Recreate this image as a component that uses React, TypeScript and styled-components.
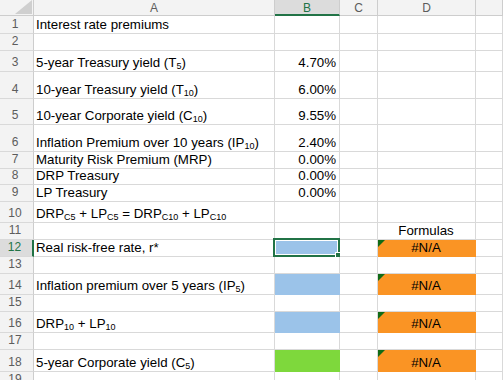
import React from "react";
import styled, { createGlobalStyle, css } from "styled-components";

const GRID = "#d9d9d9";
const HEAD_LINE = "#cdcdcd";
const EXCEL_GREEN = "#217346";

const fills = {
  blue: "#9bc3e9",
  green: "#7ed83c",
  orange: "#fa9424",
};
type Fill = keyof typeof fills;

const GlobalStyle = createGlobalStyle`
  html, body {
    margin: 0;
    padding: 0;
    background: #fff;
    overflow: hidden;
  }
  body {
    font-family: "Liberation Sans", Arial, sans-serif;
  }
`;

const Sheet = styled.div<{ $rows: string }>`
  display: grid;
  grid-template-columns: 34px 241px 65px 38px 98px 1fr;
  grid-template-rows: ${(p) => p.$rows};
  width: 503px;
  height: 380px;
  overflow: hidden;
`;

const Corner = styled.div`
  position: relative;
  background: #f3f3f3;
  border-right: 1px solid ${HEAD_LINE};
  border-bottom: 1px solid ${HEAD_LINE};

  svg {
    position: absolute;
    right: 1px;
    bottom: 1px;
  }
`;

const ColHead = styled.div<{ $active?: boolean }>`
  display: flex;
  align-items: center;
  justify-content: center;
  font-size: 12px;
  color: ${(p) => (p.$active ? EXCEL_GREEN : "#5c5c5c")};
  background: ${(p) => (p.$active ? "#dcdcdc" : "#f3f3f3")};
  border-right: 1px solid ${HEAD_LINE};
  ${(p) =>
    p.$active
      ? css`
          border-bottom: 2px solid ${EXCEL_GREEN};
          padding-top: 1px;
        `
      : css`
          border-bottom: 1px solid ${HEAD_LINE};
        `}
`;

const RowHead = styled.div<{ $active?: boolean }>`
  display: flex;
  align-items: flex-end;
  justify-content: center;
  padding: 0 3px 2px 0;
  font-size: 12px;
  line-height: 14px;
  color: ${(p) => (p.$active ? EXCEL_GREEN : "#5c5c5c")};
  background: ${(p) => (p.$active ? "#dcdcdc" : "#f3f3f3")};
  border-bottom: 1px solid ${GRID};
  border-right: ${(p) => (p.$active ? `2px solid ${EXCEL_GREEN}` : `1px solid ${HEAD_LINE}`)};
`;

const Cell = styled.div<{ $align?: "left" | "right" | "center"; $fill?: Fill }>`
  position: relative;
  display: flex;
  align-items: flex-end;
  justify-content: ${(p) =>
    p.$align === "right" ? "flex-end" : p.$align === "center" ? "center" : "flex-start"};
  min-width: 0;
  padding: 0 3px 1px 2px;
  font-size: 13.3px;
  line-height: 15px;
  color: #000;
  white-space: nowrap;
  background: ${(p) => (p.$fill ? fills[p.$fill] : "#fff")};
  border-right: 1px solid ${(p) => (p.$fill ? fills[p.$fill] : GRID)};
  border-bottom: 1px solid ${(p) => (p.$fill ? fills[p.$fill] : GRID)};
`;

// keeps text and subscripts in one inline run inside the flex cell
const Value = styled.span`
  display: block;
`;

const Sub = styled.sub`
  font-size: 9px;
  line-height: 0;
  vertical-align: -2px;
`;

// green error marker in the top-left corner
const ErrorFlag = styled.span`
  position: absolute;
  top: 0;
  left: 0;
  width: 0;
  height: 0;
  border-top: 7px solid #116b16;
  border-right: 7px solid transparent;
`;

const Selection = styled.span`
  position: absolute;
  inset: -2px -1px -1px -2px;
  border: 2px solid ${EXCEL_GREEN};
  box-shadow: inset 0 0 0 1px #fff;
  pointer-events: none;
`;

const FillHandle = styled.span`
  position: absolute;
  right: -4px;
  bottom: -4px;
  width: 5px;
  height: 5px;
  background: ${EXCEL_GREEN};
  border: 1px solid #fff;
`;

interface RowData {
  n: number;
  h: number;
  a?: React.ReactNode;
  b?: string;
  bFill?: Fill;
  d?: string;
  dFill?: Fill;
  selected?: boolean;
}

const rows: RowData[] = [
  { n: 1, h: 18, a: "Interest rate premiums" },
  { n: 2, h: 17 },
  { n: 3, h: 21, a: <>5-year Treasury yield (T<Sub>5</Sub>)</>, b: "4.70%" },
  { n: 4, h: 27, a: <>10-year Treasury yield (T<Sub>10</Sub>)</>, b: "6.00%" },
  { n: 5, h: 26, a: <>10-year Corporate yield (C<Sub>10</Sub>)</>, b: "9.55%" },
  { n: 6, h: 27, a: <>Inflation Premium over 10 years (IP<Sub>10</Sub>)</>, b: "2.40%" },
  { n: 7, h: 17, a: "Maturity Risk Premium (MRP)", b: "0.00%" },
  { n: 8, h: 16, a: "DRP Treasury", b: "0.00%" },
  { n: 9, h: 17, a: "LP Treasury", b: "0.00%" },
  {
    n: 10,
    h: 21,
    a: (
      <>
        DRP<Sub>C5</Sub> + LP<Sub>C5</Sub> = DRP<Sub>C10</Sub> + LP<Sub>C10</Sub>
      </>
    ),
  },
  { n: 11, h: 17, d: "Formulas" },
  { n: 12, h: 17, a: "Real risk-free rate, r*", bFill: "blue", d: "#N/A", dFill: "orange", selected: true },
  { n: 13, h: 17 },
  { n: 14, h: 21, a: <>Inflation premium over 5 years (IP<Sub>5</Sub>)</>, bFill: "blue", d: "#N/A", dFill: "orange" },
  { n: 15, h: 17 },
  { n: 16, h: 21, a: <>DRP<Sub>10</Sub> + LP<Sub>10</Sub></>, bFill: "blue", d: "#N/A", dFill: "orange" },
  { n: 17, h: 17 },
  { n: 18, h: 22, a: <>5-year Corporate yield (C<Sub>5</Sub>)</>, bFill: "green", d: "#N/A", dFill: "orange" },
  { n: 19, h: 17 },
];

const columns = ["A", "B", "C", "D", ""];

export default function App() {
  const template = ["16px", ...rows.map((r) => `${r.h}px`)].join(" ");

  return (
    <>
      <GlobalStyle />
      <Sheet $rows={template}>
        <Corner>
          <svg width="17" height="14" viewBox="0 0 17 14">
            <polygon points="17,0 17,14 0,14" fill="#cfcfcf" />
          </svg>
        </Corner>
        {columns.map((c, i) => (
          <ColHead key={i} $active={c === "B"}>
            {c}
          </ColHead>
        ))}

        {rows.map((r) => (
          <React.Fragment key={r.n}>
            <RowHead $active={r.selected}>{r.n}</RowHead>
            <Cell>{r.a && <Value>{r.a}</Value>}</Cell>
            <Cell $align="right" $fill={r.bFill}>
              {r.b && <Value>{r.b}</Value>}
              {r.selected && (
                <Selection>
                  <FillHandle />
                </Selection>
              )}
            </Cell>
            <Cell />
            <Cell $align="center" $fill={r.dFill}>
              {r.dFill && <ErrorFlag />}
              {r.d && <Value>{r.d}</Value>}
            </Cell>
            <Cell />
          </React.Fragment>
        ))}
      </Sheet>
    </>
  );
}
